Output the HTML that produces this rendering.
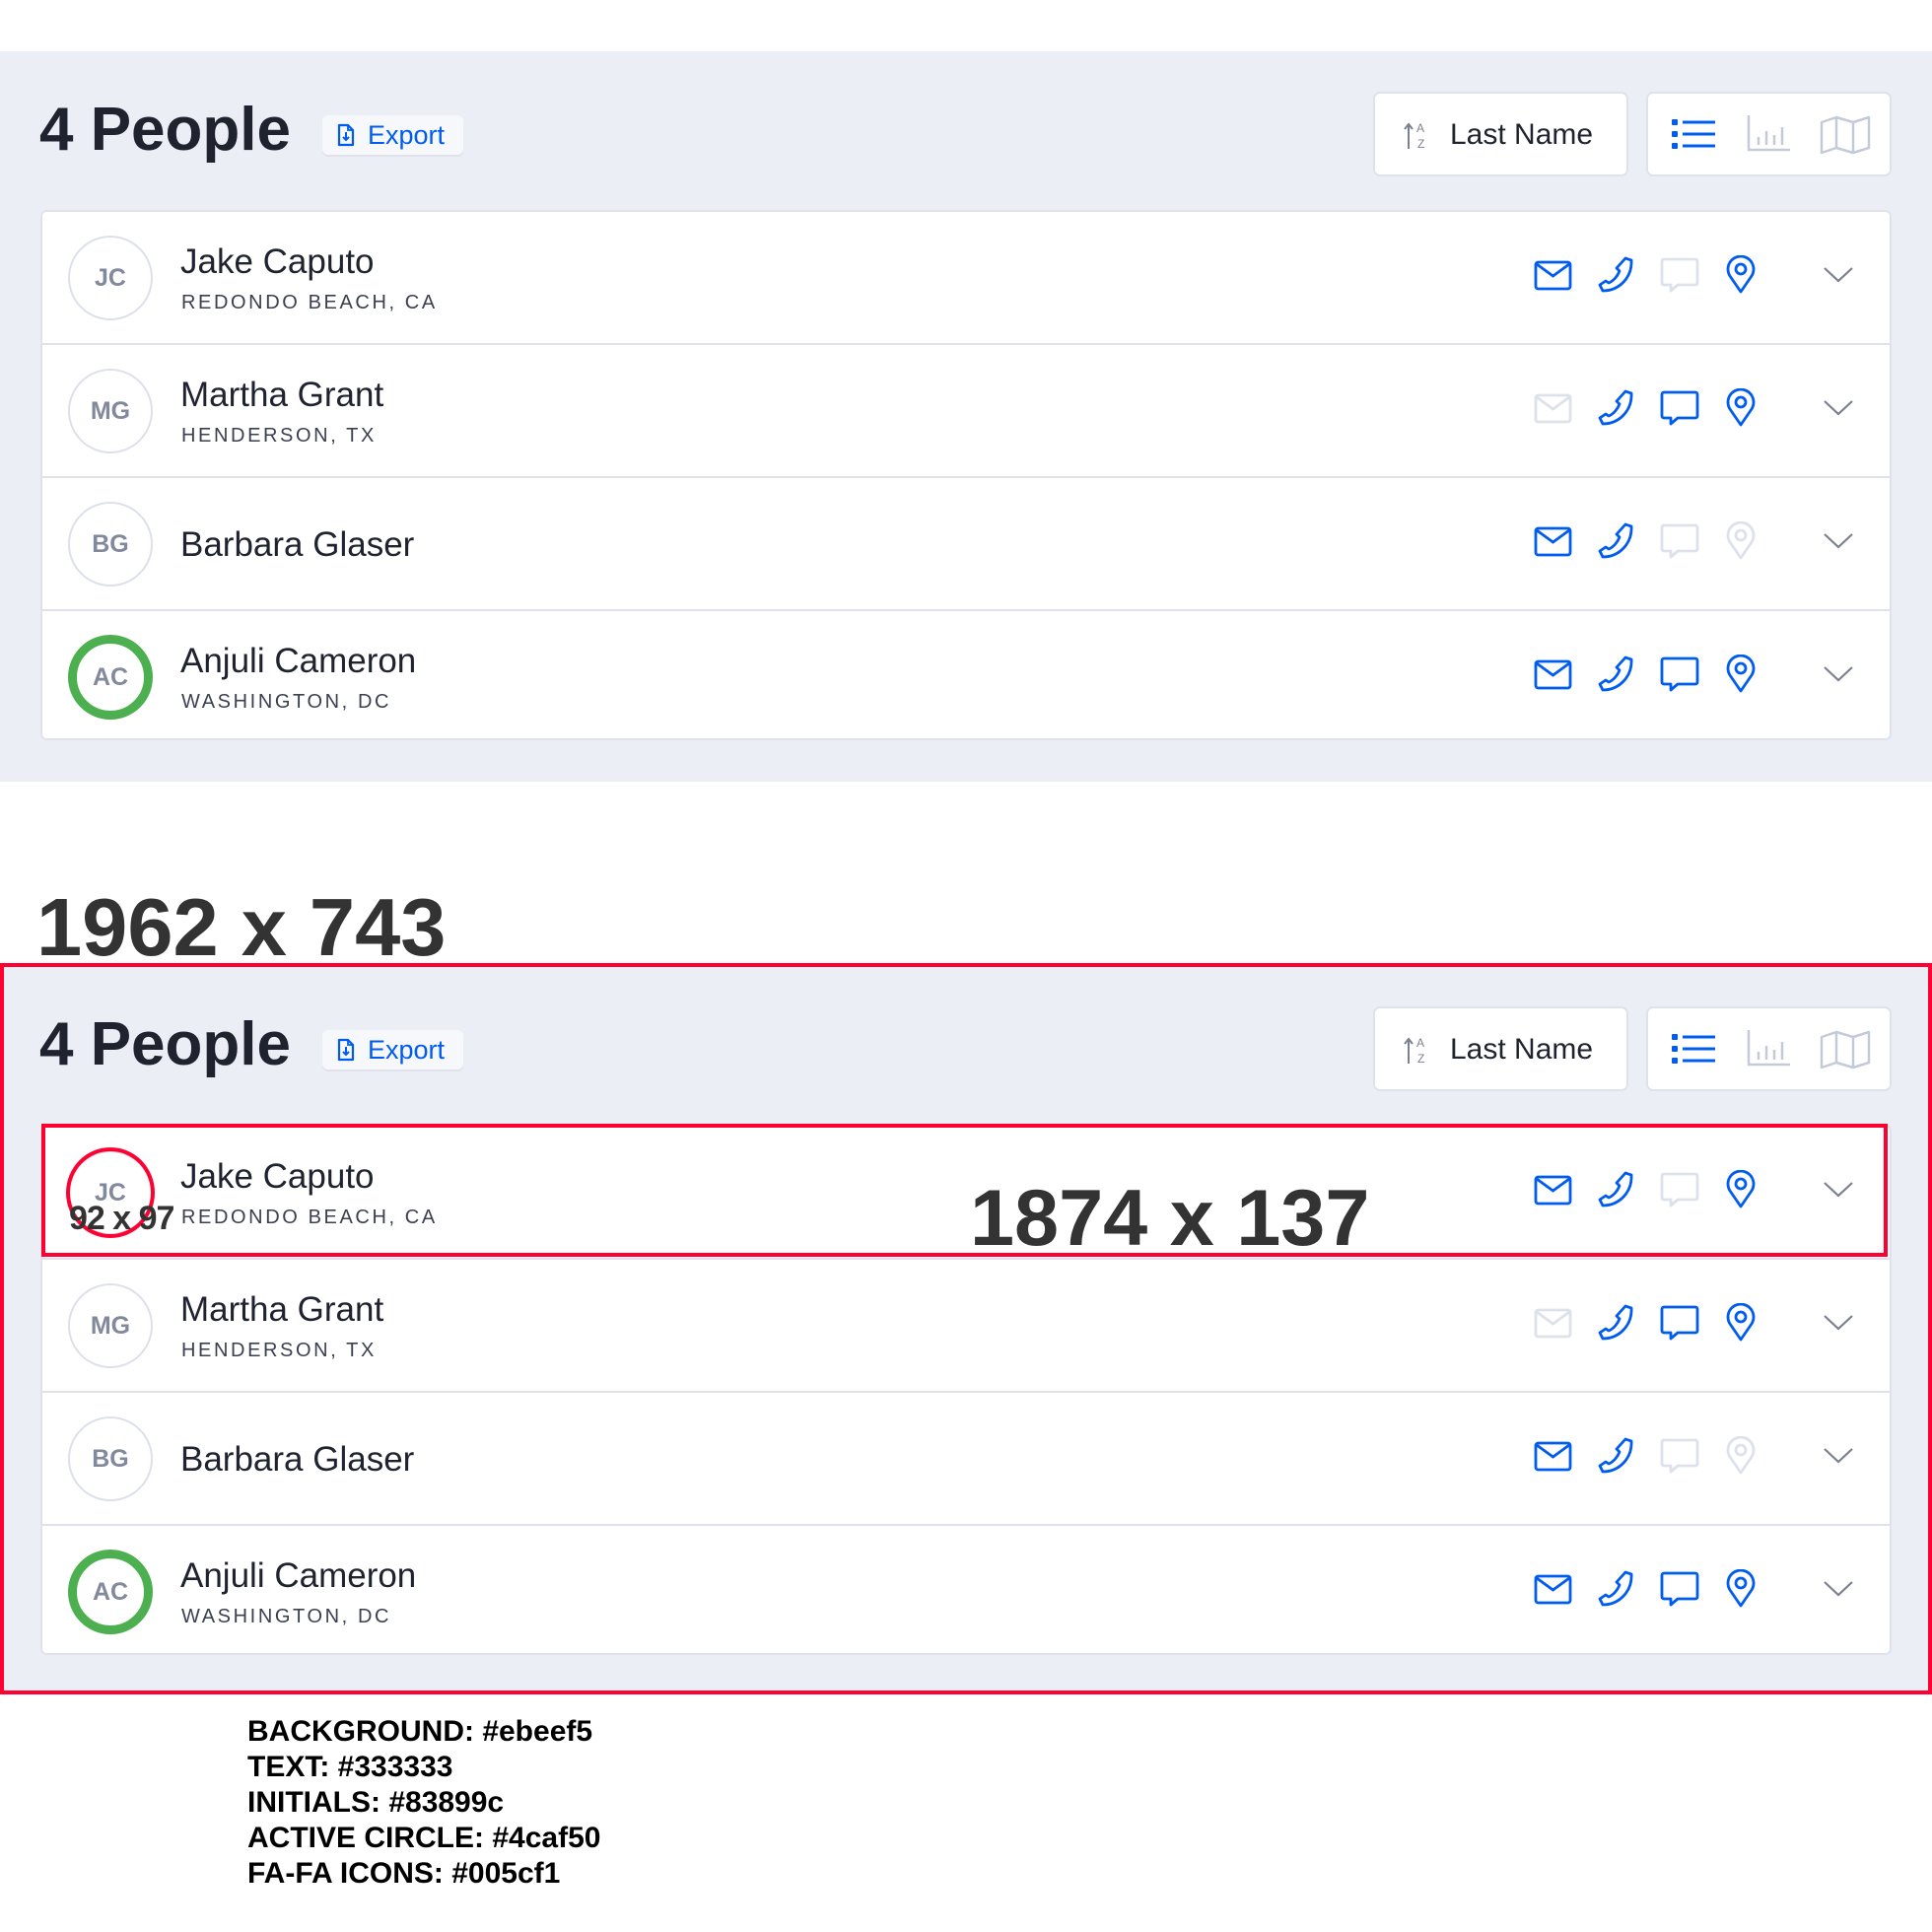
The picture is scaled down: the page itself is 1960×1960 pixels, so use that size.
<!DOCTYPE html>
<html><head><meta charset="utf-8">
<style>
*{margin:0;padding:0;box-sizing:border-box}
body{width:1960px;height:1960px;background:#fff;position:relative;overflow:hidden;font-family:"Liberation Sans",sans-serif;color:#1f2330}
.panel{position:absolute;left:0;width:1960px;height:741px;background:#ebeef5}
.a{position:absolute;white-space:nowrap}
.title{left:40px;top:49px;font-size:62px;line-height:62px;font-weight:bold;color:#1f2330}
.export{left:327px;top:65px;width:143px;height:40px;background:#f7f8fb;border-radius:6px;box-shadow:0 2px 0 #dfe2ec}
.export span{position:absolute;left:46px;top:7px;font-size:27px;line-height:27px;color:#005cf1}
.box{background:#fff;border:2px solid #dfe2ec;border-radius:7px}
.card{left:41px;top:161px;width:1878px;height:538px;background:#fff;border:2px solid #dfe2ec;border-radius:6px;overflow:hidden}
.row{position:absolute;left:0;width:1874px;height:135px;border-bottom:2px solid #dfe2ec}
.av{position:absolute;left:26px;top:24px;width:86px;height:86px;border-radius:50%;border:2px solid #dde0ea;color:#83899c;font-size:25px;font-weight:bold;text-align:center;line-height:82px}
.av.on{border:9px solid #4caf50;line-height:68px}
.nm{position:absolute;left:140px;top:33px;font-size:35px;line-height:35px;color:#1f2330;white-space:nowrap}
.lc{position:absolute;left:141px;top:82px;font-size:20px;line-height:20px;letter-spacing:2.6px;color:#3b4050;white-space:nowrap}
.ic{position:absolute;top:44px;width:40px;height:40px}
.lg{position:absolute;left:251px;font-size:30px;line-height:30px;font-weight:bold;color:#000}
</style></head><body>

<div class="panel" style="top:52px">
  <div class="a title">4 People</div>
  <div class="a export">
    <svg style="position:absolute;left:14px;top:8px" width="20" height="24" viewBox="0 0 20 24"><path d="M3 2h9l5 5v15H3z" fill="none" stroke="#005cf1" stroke-width="2.2" stroke-linejoin="round"/><path d="M12 2v5h5" fill="none" stroke="#005cf1" stroke-width="1.8"/><path d="M10 9v8M7 14l3 3 3-3" fill="none" stroke="#005cf1" stroke-width="2"/></svg>
    <span>Export</span>
  </div>
  <div class="a box" style="left:1393px;top:41px;width:259px;height:86px">
    <svg style="position:absolute;left:28px;top:28px" width="30" height="30" viewBox="0 0 30 30"><path d="M6 28V3M2 8l4-5 4 5" fill="none" stroke="#7c8190" stroke-width="2"/><text x="14" y="11" font-family="Liberation Sans" font-size="12" fill="#7c8190">A</text><text x="15" y="27" font-family="Liberation Sans" font-size="12" fill="#7c8190">Z</text></svg>
    <div class="a" style="left:76px;top:27px;font-size:30px;line-height:30px;color:#1f2330">Last Name</div>
  </div>
  <div class="a box" style="left:1670px;top:41px;width:249px;height:86px">
    <svg style="position:absolute;left:24px;top:24px" width="46" height="34" viewBox="0 0 46 34"><rect x="0" y="2" width="6" height="6" rx="1" fill="#005cf1"/><rect x="0" y="14" width="6" height="6" rx="1" fill="#005cf1"/><rect x="0" y="26" width="6" height="6" rx="1" fill="#005cf1"/><path d="M11 5h33M11 17h33M11 29h33" stroke="#005cf1" stroke-width="3"/></svg>
    <svg style="position:absolute;left:100px;top:22px" width="46" height="38" viewBox="0 0 46 38"><path d="M2 0v35h42" fill="none" stroke="#c5cad8" stroke-width="2.5"/><path d="M12 30v-8M20 30v-14M28 30v-10M36 30v-18" stroke="#c5cad8" stroke-width="2.5"/></svg>
    <svg style="position:absolute;left:174px;top:22px" width="52" height="40" viewBox="0 0 52 40"><path d="M2 7l15-5 17 5 16-5v31l-16 5-17-5-15 5z M17 2v31 M34 7v31" fill="none" stroke="#c5cad8" stroke-width="2.5" stroke-linejoin="round"/></svg>
  </div>
  <div class="a card">
    <div class="row" style="top:0">
      <div class="av">JC</div><div class="nm">Jake Caputo</div><div class="lc">REDONDO BEACH, CA</div>
      <svg class="ic" style="left:1513px" viewBox="0 0 40 40"><rect x="2" y="7" width="35" height="27" rx="2.5" fill="none" stroke="#005cf1" stroke-width="2.8"/><path d="M3 9l16.5 12L36 9" fill="none" stroke="#005cf1" stroke-width="2.8"/></svg>
      <svg class="ic" style="left:1576px" viewBox="0 0 40 40"><path d="M30 3l6 2c1 17-12 31-29 31l-3-6 6-4 3 2c5-2 9-7 11-12l-3-3z" fill="none" stroke="#005cf1" stroke-width="2.8" stroke-linejoin="round"/></svg>
      <svg class="ic" style="left:1641px" viewBox="0 0 40 40"><path d="M4 4h32a2 2 0 0 1 2 2v22a2 2 0 0 1-2 2H18l-7 6v-6H4a2 2 0 0 1-2-2V6a2 2 0 0 1 2-2z" fill="none" stroke="#dde1eb" stroke-width="2.8" stroke-linejoin="round"/></svg>
      <svg class="ic" style="left:1703px" viewBox="0 0 40 40"><path d="M20 37L9 21a13 13 0 1 1 22 0z" fill="none" stroke="#005cf1" stroke-width="2.8" stroke-linejoin="round"/><circle cx="20" cy="14" r="5" fill="none" stroke="#005cf1" stroke-width="2.8"/></svg>
      <svg class="ic" style="left:1802px" viewBox="0 0 40 40"><path d="M6 13l14 13 14-13" fill="none" stroke="#7c8190" stroke-width="2.2"/></svg>
    </div>
    <div class="row" style="top:135px">
      <div class="av">MG</div><div class="nm">Martha Grant</div><div class="lc">HENDERSON, TX</div>
      <svg class="ic" style="left:1513px" viewBox="0 0 40 40"><rect x="2" y="7" width="35" height="27" rx="2.5" fill="none" stroke="#dde1eb" stroke-width="2.8"/><path d="M3 9l16.5 12L36 9" fill="none" stroke="#dde1eb" stroke-width="2.8"/></svg>
      <svg class="ic" style="left:1576px" viewBox="0 0 40 40"><path d="M30 3l6 2c1 17-12 31-29 31l-3-6 6-4 3 2c5-2 9-7 11-12l-3-3z" fill="none" stroke="#005cf1" stroke-width="2.8" stroke-linejoin="round"/></svg>
      <svg class="ic" style="left:1641px" viewBox="0 0 40 40"><path d="M4 4h32a2 2 0 0 1 2 2v22a2 2 0 0 1-2 2H18l-7 6v-6H4a2 2 0 0 1-2-2V6a2 2 0 0 1 2-2z" fill="none" stroke="#005cf1" stroke-width="2.8" stroke-linejoin="round"/></svg>
      <svg class="ic" style="left:1703px" viewBox="0 0 40 40"><path d="M20 37L9 21a13 13 0 1 1 22 0z" fill="none" stroke="#005cf1" stroke-width="2.8" stroke-linejoin="round"/><circle cx="20" cy="14" r="5" fill="none" stroke="#005cf1" stroke-width="2.8"/></svg>
      <svg class="ic" style="left:1802px" viewBox="0 0 40 40"><path d="M6 13l14 13 14-13" fill="none" stroke="#7c8190" stroke-width="2.2"/></svg>
    </div>
    <div class="row" style="top:270px">
      <div class="av">BG</div><div class="nm" style="top:50px">Barbara Glaser</div>
      <svg class="ic" style="left:1513px" viewBox="0 0 40 40"><rect x="2" y="7" width="35" height="27" rx="2.5" fill="none" stroke="#005cf1" stroke-width="2.8"/><path d="M3 9l16.5 12L36 9" fill="none" stroke="#005cf1" stroke-width="2.8"/></svg>
      <svg class="ic" style="left:1576px" viewBox="0 0 40 40"><path d="M30 3l6 2c1 17-12 31-29 31l-3-6 6-4 3 2c5-2 9-7 11-12l-3-3z" fill="none" stroke="#005cf1" stroke-width="2.8" stroke-linejoin="round"/></svg>
      <svg class="ic" style="left:1641px" viewBox="0 0 40 40"><path d="M4 4h32a2 2 0 0 1 2 2v22a2 2 0 0 1-2 2H18l-7 6v-6H4a2 2 0 0 1-2-2V6a2 2 0 0 1 2-2z" fill="none" stroke="#dde1eb" stroke-width="2.8" stroke-linejoin="round"/></svg>
      <svg class="ic" style="left:1703px" viewBox="0 0 40 40"><path d="M20 37L9 21a13 13 0 1 1 22 0z" fill="none" stroke="#dde1eb" stroke-width="2.8" stroke-linejoin="round"/><circle cx="20" cy="14" r="5" fill="none" stroke="#dde1eb" stroke-width="2.8"/></svg>
      <svg class="ic" style="left:1802px" viewBox="0 0 40 40"><path d="M6 13l14 13 14-13" fill="none" stroke="#7c8190" stroke-width="2.2"/></svg>
    </div>
    <div class="row" style="top:405px;border-bottom:none">
      <div class="av on">AC</div><div class="nm">Anjuli Cameron</div><div class="lc">WASHINGTON, DC</div>
      <svg class="ic" style="left:1513px" viewBox="0 0 40 40"><rect x="2" y="7" width="35" height="27" rx="2.5" fill="none" stroke="#005cf1" stroke-width="2.8"/><path d="M3 9l16.5 12L36 9" fill="none" stroke="#005cf1" stroke-width="2.8"/></svg>
      <svg class="ic" style="left:1576px" viewBox="0 0 40 40"><path d="M30 3l6 2c1 17-12 31-29 31l-3-6 6-4 3 2c5-2 9-7 11-12l-3-3z" fill="none" stroke="#005cf1" stroke-width="2.8" stroke-linejoin="round"/></svg>
      <svg class="ic" style="left:1641px" viewBox="0 0 40 40"><path d="M4 4h32a2 2 0 0 1 2 2v22a2 2 0 0 1-2 2H18l-7 6v-6H4a2 2 0 0 1-2-2V6a2 2 0 0 1 2-2z" fill="none" stroke="#005cf1" stroke-width="2.8" stroke-linejoin="round"/></svg>
      <svg class="ic" style="left:1703px" viewBox="0 0 40 40"><path d="M20 37L9 21a13 13 0 1 1 22 0z" fill="none" stroke="#005cf1" stroke-width="2.8" stroke-linejoin="round"/><circle cx="20" cy="14" r="5" fill="none" stroke="#005cf1" stroke-width="2.8"/></svg>
      <svg class="ic" style="left:1802px" viewBox="0 0 40 40"><path d="M6 13l14 13 14-13" fill="none" stroke="#7c8190" stroke-width="2.2"/></svg>
    </div>
  </div>
</div>

<div class="a" style="left:37px;top:899px;font-size:83px;line-height:83px;font-weight:bold;color:#333">1962 x 743</div>

<div class="panel" style="top:980px;height:737px">
  <div class="a title">4 People</div>
  <div class="a export">
    <svg style="position:absolute;left:14px;top:8px" width="20" height="24" viewBox="0 0 20 24"><path d="M3 2h9l5 5v15H3z" fill="none" stroke="#005cf1" stroke-width="2.2" stroke-linejoin="round"/><path d="M12 2v5h5" fill="none" stroke="#005cf1" stroke-width="1.8"/><path d="M10 9v8M7 14l3 3 3-3" fill="none" stroke="#005cf1" stroke-width="2"/></svg>
    <span>Export</span>
  </div>
  <div class="a box" style="left:1393px;top:41px;width:259px;height:86px">
    <svg style="position:absolute;left:28px;top:28px" width="30" height="30" viewBox="0 0 30 30"><path d="M6 28V3M2 8l4-5 4 5" fill="none" stroke="#7c8190" stroke-width="2"/><text x="14" y="11" font-family="Liberation Sans" font-size="12" fill="#7c8190">A</text><text x="15" y="27" font-family="Liberation Sans" font-size="12" fill="#7c8190">Z</text></svg>
    <div class="a" style="left:76px;top:27px;font-size:30px;line-height:30px;color:#1f2330">Last Name</div>
  </div>
  <div class="a box" style="left:1670px;top:41px;width:249px;height:86px">
    <svg style="position:absolute;left:24px;top:24px" width="46" height="34" viewBox="0 0 46 34"><rect x="0" y="2" width="6" height="6" rx="1" fill="#005cf1"/><rect x="0" y="14" width="6" height="6" rx="1" fill="#005cf1"/><rect x="0" y="26" width="6" height="6" rx="1" fill="#005cf1"/><path d="M11 5h33M11 17h33M11 29h33" stroke="#005cf1" stroke-width="3"/></svg>
    <svg style="position:absolute;left:100px;top:22px" width="46" height="38" viewBox="0 0 46 38"><path d="M2 0v35h42" fill="none" stroke="#c5cad8" stroke-width="2.5"/><path d="M12 30v-8M20 30v-14M28 30v-10M36 30v-18" stroke="#c5cad8" stroke-width="2.5"/></svg>
    <svg style="position:absolute;left:174px;top:22px" width="52" height="40" viewBox="0 0 52 40"><path d="M2 7l15-5 17 5 16-5v31l-16 5-17-5-15 5z M17 2v31 M34 7v31" fill="none" stroke="#c5cad8" stroke-width="2.5" stroke-linejoin="round"/></svg>
  </div>
  <div class="a card">
    <div class="row" style="top:0">
      <div class="av">JC</div><div class="nm">Jake Caputo</div><div class="lc">REDONDO BEACH, CA</div>
      <svg class="ic" style="left:1513px" viewBox="0 0 40 40"><rect x="2" y="7" width="35" height="27" rx="2.5" fill="none" stroke="#005cf1" stroke-width="2.8"/><path d="M3 9l16.5 12L36 9" fill="none" stroke="#005cf1" stroke-width="2.8"/></svg>
      <svg class="ic" style="left:1576px" viewBox="0 0 40 40"><path d="M30 3l6 2c1 17-12 31-29 31l-3-6 6-4 3 2c5-2 9-7 11-12l-3-3z" fill="none" stroke="#005cf1" stroke-width="2.8" stroke-linejoin="round"/></svg>
      <svg class="ic" style="left:1641px" viewBox="0 0 40 40"><path d="M4 4h32a2 2 0 0 1 2 2v22a2 2 0 0 1-2 2H18l-7 6v-6H4a2 2 0 0 1-2-2V6a2 2 0 0 1 2-2z" fill="none" stroke="#dde1eb" stroke-width="2.8" stroke-linejoin="round"/></svg>
      <svg class="ic" style="left:1703px" viewBox="0 0 40 40"><path d="M20 37L9 21a13 13 0 1 1 22 0z" fill="none" stroke="#005cf1" stroke-width="2.8" stroke-linejoin="round"/><circle cx="20" cy="14" r="5" fill="none" stroke="#005cf1" stroke-width="2.8"/></svg>
      <svg class="ic" style="left:1802px" viewBox="0 0 40 40"><path d="M6 13l14 13 14-13" fill="none" stroke="#7c8190" stroke-width="2.2"/></svg>
    </div>
    <div class="row" style="top:135px">
      <div class="av">MG</div><div class="nm">Martha Grant</div><div class="lc">HENDERSON, TX</div>
      <svg class="ic" style="left:1513px" viewBox="0 0 40 40"><rect x="2" y="7" width="35" height="27" rx="2.5" fill="none" stroke="#dde1eb" stroke-width="2.8"/><path d="M3 9l16.5 12L36 9" fill="none" stroke="#dde1eb" stroke-width="2.8"/></svg>
      <svg class="ic" style="left:1576px" viewBox="0 0 40 40"><path d="M30 3l6 2c1 17-12 31-29 31l-3-6 6-4 3 2c5-2 9-7 11-12l-3-3z" fill="none" stroke="#005cf1" stroke-width="2.8" stroke-linejoin="round"/></svg>
      <svg class="ic" style="left:1641px" viewBox="0 0 40 40"><path d="M4 4h32a2 2 0 0 1 2 2v22a2 2 0 0 1-2 2H18l-7 6v-6H4a2 2 0 0 1-2-2V6a2 2 0 0 1 2-2z" fill="none" stroke="#005cf1" stroke-width="2.8" stroke-linejoin="round"/></svg>
      <svg class="ic" style="left:1703px" viewBox="0 0 40 40"><path d="M20 37L9 21a13 13 0 1 1 22 0z" fill="none" stroke="#005cf1" stroke-width="2.8" stroke-linejoin="round"/><circle cx="20" cy="14" r="5" fill="none" stroke="#005cf1" stroke-width="2.8"/></svg>
      <svg class="ic" style="left:1802px" viewBox="0 0 40 40"><path d="M6 13l14 13 14-13" fill="none" stroke="#7c8190" stroke-width="2.2"/></svg>
    </div>
    <div class="row" style="top:270px">
      <div class="av">BG</div><div class="nm" style="top:50px">Barbara Glaser</div>
      <svg class="ic" style="left:1513px" viewBox="0 0 40 40"><rect x="2" y="7" width="35" height="27" rx="2.5" fill="none" stroke="#005cf1" stroke-width="2.8"/><path d="M3 9l16.5 12L36 9" fill="none" stroke="#005cf1" stroke-width="2.8"/></svg>
      <svg class="ic" style="left:1576px" viewBox="0 0 40 40"><path d="M30 3l6 2c1 17-12 31-29 31l-3-6 6-4 3 2c5-2 9-7 11-12l-3-3z" fill="none" stroke="#005cf1" stroke-width="2.8" stroke-linejoin="round"/></svg>
      <svg class="ic" style="left:1641px" viewBox="0 0 40 40"><path d="M4 4h32a2 2 0 0 1 2 2v22a2 2 0 0 1-2 2H18l-7 6v-6H4a2 2 0 0 1-2-2V6a2 2 0 0 1 2-2z" fill="none" stroke="#dde1eb" stroke-width="2.8" stroke-linejoin="round"/></svg>
      <svg class="ic" style="left:1703px" viewBox="0 0 40 40"><path d="M20 37L9 21a13 13 0 1 1 22 0z" fill="none" stroke="#dde1eb" stroke-width="2.8" stroke-linejoin="round"/><circle cx="20" cy="14" r="5" fill="none" stroke="#dde1eb" stroke-width="2.8"/></svg>
      <svg class="ic" style="left:1802px" viewBox="0 0 40 40"><path d="M6 13l14 13 14-13" fill="none" stroke="#7c8190" stroke-width="2.2"/></svg>
    </div>
    <div class="row" style="top:405px;border-bottom:none">
      <div class="av on">AC</div><div class="nm">Anjuli Cameron</div><div class="lc">WASHINGTON, DC</div>
      <svg class="ic" style="left:1513px" viewBox="0 0 40 40"><rect x="2" y="7" width="35" height="27" rx="2.5" fill="none" stroke="#005cf1" stroke-width="2.8"/><path d="M3 9l16.5 12L36 9" fill="none" stroke="#005cf1" stroke-width="2.8"/></svg>
      <svg class="ic" style="left:1576px" viewBox="0 0 40 40"><path d="M30 3l6 2c1 17-12 31-29 31l-3-6 6-4 3 2c5-2 9-7 11-12l-3-3z" fill="none" stroke="#005cf1" stroke-width="2.8" stroke-linejoin="round"/></svg>
      <svg class="ic" style="left:1641px" viewBox="0 0 40 40"><path d="M4 4h32a2 2 0 0 1 2 2v22a2 2 0 0 1-2 2H18l-7 6v-6H4a2 2 0 0 1-2-2V6a2 2 0 0 1 2-2z" fill="none" stroke="#005cf1" stroke-width="2.8" stroke-linejoin="round"/></svg>
      <svg class="ic" style="left:1703px" viewBox="0 0 40 40"><path d="M20 37L9 21a13 13 0 1 1 22 0z" fill="none" stroke="#005cf1" stroke-width="2.8" stroke-linejoin="round"/><circle cx="20" cy="14" r="5" fill="none" stroke="#005cf1" stroke-width="2.8"/></svg>
      <svg class="ic" style="left:1802px" viewBox="0 0 40 40"><path d="M6 13l14 13 14-13" fill="none" stroke="#7c8190" stroke-width="2.2"/></svg>
    </div>
  </div>
</div>

<div class="a" style="left:0;top:977px;width:1960px;height:742px;border:4px solid #ff0033"></div>
<div class="a" style="left:42px;top:1140px;width:1873px;height:135px;border:4px solid #ff0033"></div>
<div class="a" style="left:67px;top:1164px;width:90px;height:92px;border:4px solid #ff0033;border-radius:50%"></div>
<div class="a" style="left:70px;top:1219px;font-size:34px;line-height:34px;font-weight:bold;color:#333;letter-spacing:-1px">92 x 97</div>
<div class="a" style="left:984px;top:1196px;font-size:81px;line-height:81px;font-weight:bold;color:#333">1874 x 137</div>

<div class="lg" style="top:1742px">BACKGROUND: #ebeef5</div>
<div class="lg" style="top:1778px">TEXT: #333333</div>
<div class="lg" style="top:1814px">INITIALS: #83899c</div>
<div class="lg" style="top:1850px">ACTIVE CIRCLE: #4caf50</div>
<div class="lg" style="top:1886px">FA-FA ICONS: #005cf1</div>
</body></html>
